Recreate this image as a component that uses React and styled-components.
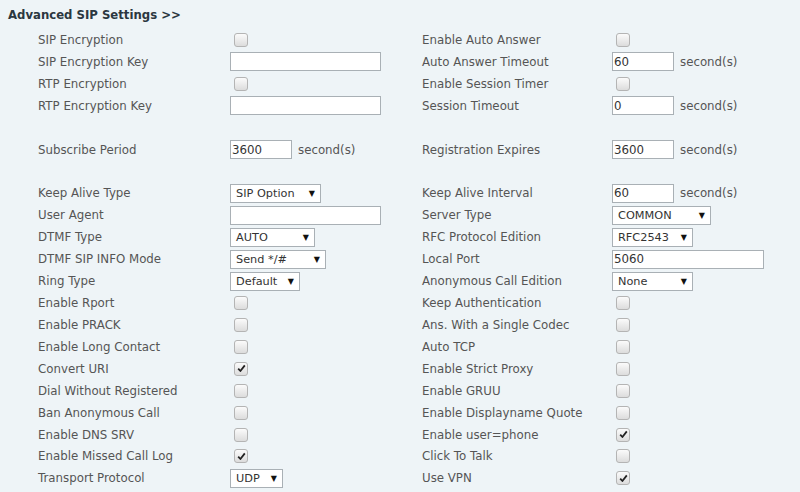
import React from "react";
import styled, { createGlobalStyle } from "styled-components";

const Global = createGlobalStyle`
  html, body { margin: 0; padding: 0; background: #eef4f7; }
  body { font-family: "DejaVu Sans", Verdana, sans-serif; }
`;

const Page = styled.div`
  width: 800px;
  height: 492px;
  overflow: hidden;
  background: #eef4f7;
  padding: 7px 0 0 8px;
  box-sizing: border-box;
`;

const Title = styled.div`
  font-size: 11.7px;
  font-weight: bold;
  color: #2b3740;
  line-height: 16px;
  height: 22px;
`;

const Grid = styled.div`
  display: grid;
  grid-template-columns: 192px 192px 190px 1fr;
  grid-auto-rows: 21.93px;
  padding-left: 30px;
  font-size: 11.8px;
  color: #555;
`;

const Label = styled.div`
  display: flex;
  align-items: center;
  white-space: nowrap;
`;

const Cell = styled.div`
  display: flex;
  align-items: center;
  gap: 6px;
`;

const Spacer = styled.div`
  grid-column: 1 / -1;
`;

const TextBox = styled.div`
  width: ${(p) => p.$w}px;
  height: 19px;
  box-sizing: border-box;
  background: #fff;
  border: 1px solid #a9b0b5;
  font-size: 11.8px;
  color: #333;
  padding: 0 1px;
  display: flex;
  align-items: center;
`;

const Unit = styled.span`
  color: #555;
`;

const SelectBox = styled.div`
  width: ${(p) => p.$w}px;
  height: 19px;
  box-sizing: border-box;
  background: #fff;
  border: 1px solid #a9b0b5;
  font-size: 11.3px;
  color: #333;
  padding: 0 5px 0 5px;
  display: flex;
  align-items: center;
  justify-content: space-between;
`;

const Arrow = styled.span`
  font-size: 8px;
  color: #111;
`;

const Check = styled.div`
  width: 12px;
  height: 12px;
  margin-left: 4px;
  border: 1px solid #b4b4b4;
  border-radius: 3px;
  background: linear-gradient(#fbfbfb, #dcdcdc);
  display: flex;
  align-items: center;
  justify-content: center;
`;

const CheckBox = ({ on }) => (
  <Check>
    {on && (
      <svg width="9" height="9" viewBox="0 0 9 9">
        <path d="M1.2 4.6 L3.4 7 L7.8 1.4" fill="none" stroke="#222" strokeWidth="1.8" strokeLinejoin="round" />
      </svg>
    )}
  </Check>
);

const Control = ({ c }) => {
  if (!c) return <Cell />;
  if (c.t === "cb") return <Cell><CheckBox on={c.on} /></Cell>;
  if (c.t === "in")
    return (
      <Cell>
        <TextBox $w={c.w}>{c.v}</TextBox>
        {c.u && <Unit>{c.u}</Unit>}
      </Cell>
    );
  return (
    <Cell>
      <SelectBox $w={c.w}>
        <span>{c.v}</span>
        <Arrow>▼</Arrow>
      </SelectBox>
    </Cell>
  );
};

const cb = (on = false) => ({ t: "cb", on });
const inp = (w, v = "", u) => ({ t: "in", w, v, u });
const sel = (w, v) => ({ t: "sel", w, v });

const rows = [
  ["SIP Encryption", cb(), "Enable Auto Answer", cb()],
  ["SIP Encryption Key", inp(151), "Auto Answer Timeout", inp(62, "60", "second(s)")],
  ["RTP Encryption", cb(), "Enable Session Timer", cb()],
  ["RTP Encryption Key", inp(151), "Session Timeout", inp(62, "0", "second(s)")],
  null,
  ["Subscribe Period", inp(62, "3600", "second(s)"), "Registration Expires", inp(62, "3600", "second(s)")],
  null,
  ["Keep Alive Type", sel(91, "SIP Option"), "Keep Alive Interval", inp(62, "60", "second(s)")],
  ["User Agent", inp(151), "Server Type", sel(99, "COMMON")],
  ["DTMF Type", sel(85, "AUTO"), "RFC Protocol Edition", sel(81, "RFC2543")],
  ["DTMF SIP INFO Mode", sel(96, "Send */#"), "Local Port", inp(152, "5060")],
  ["Ring Type", sel(70, "Default"), "Anonymous Call Edition", sel(81, "None")],
  ["Enable Rport", cb(), "Keep Authentication", cb()],
  ["Enable PRACK", cb(), "Ans. With a Single Codec", cb()],
  ["Enable Long Contact", cb(), "Auto TCP", cb()],
  ["Convert URI", cb(true), "Enable Strict Proxy", cb()],
  ["Dial Without Registered", cb(), "Enable GRUU", cb()],
  ["Ban Anonymous Call", cb(), "Enable Displayname Quote", cb()],
  ["Enable DNS SRV", cb(), "Enable user=phone", cb(true)],
  ["Enable Missed Call Log", cb(true), "Click To Talk", cb()],
  ["Transport Protocol", sel(53, "UDP"), "Use VPN", cb(true)],
];

export default function App() {
  return (
    <Page>
      <Global />
      <Title>Advanced SIP Settings &gt;&gt;</Title>
      <Grid>
        {rows.map((r, i) =>
          r ? (
            <React.Fragment key={i}>
              <Label>{r[0]}</Label>
              <Control c={r[1]} />
              <Label>{r[2]}</Label>
              <Control c={r[3]} />
            </React.Fragment>
          ) : (
            <Spacer key={i} />
          )
        )}
      </Grid>
    </Page>
  );
}
